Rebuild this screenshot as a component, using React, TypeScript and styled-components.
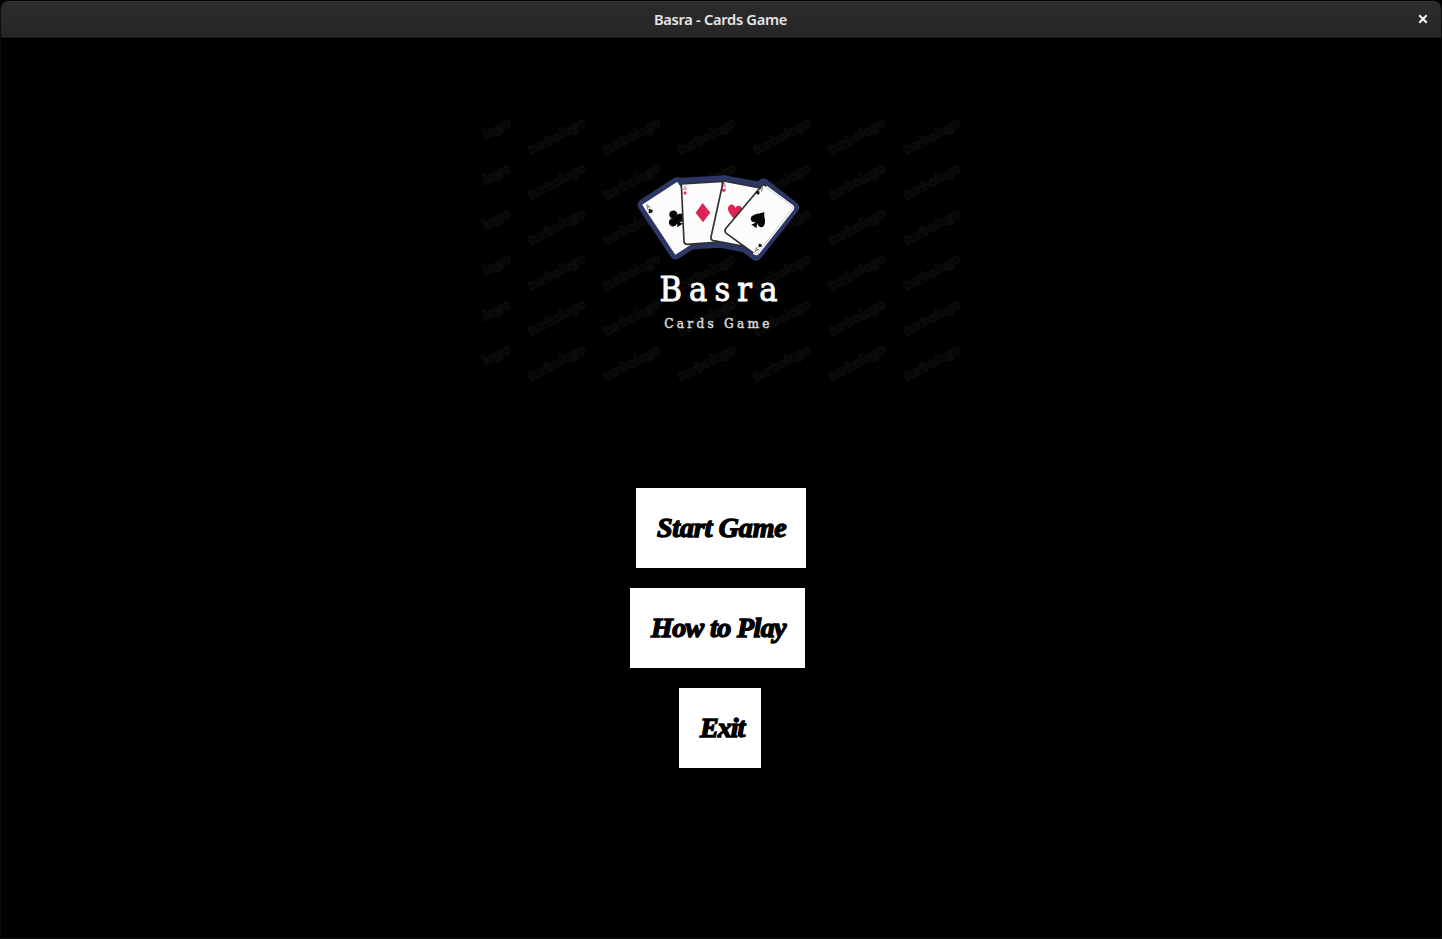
import React from 'react';
import styled, { createGlobalStyle } from 'styled-components';

const GlobalStyle = createGlobalStyle`
  * { box-sizing: border-box; }
  body { margin: 0; background: #000; overflow: hidden; }
`;

const Window = styled.div`
  width: 1442px;
  height: 939px;
  display: flex;
  flex-direction: column;
  background: #000;
  border: 1px solid #0c0c0c;
  border-top-color: #050505;
  border-radius: 8px 8px 0 0;
  overflow: hidden;
`;

const TitleBar = styled.header`
  flex: none;
  height: 37px;
  display: grid;
  grid-template-columns: 36px 1fr 36px;
  align-items: center;
  border-top: 1px solid #383838;
  border-bottom: 1px solid #151515;
  border-radius: 8px 8px 0 0;
  background: linear-gradient(#2b2b2b, #262626);
`;

const Title = styled.h1`
  grid-column: 2;
  margin: 0;
  padding: 0 1px 2px 0;
  text-align: center;
  font: 600 14.67px/20px 'Noto Sans', sans-serif;
  letter-spacing: -0.3px;
  color: #e6e6e6;
`;

const CloseButton = styled.button`
  display: flex;
  align-items: center;
  justify-content: center;
  height: 34px;
  padding: 0 0 2px;
  border: 0;
  background: none;
`;

const Screen = styled.main`
  display: flex;
  flex-direction: column;
  align-items: center;
`;

const Banner = styled.section`
  display: grid;
  width: 482px;
  height: 270px;
  margin-top: 78px;
  > * { grid-area: 1 / 1; }
`;

const Brand = styled.div`
  display: flex;
  flex-direction: column;
  align-items: center;
  padding-top: 49px;
`;

const CardsArt = styled.svg`
  display: block;
  width: 180px;
  height: 105px;
  margin-right: 2px;
`;

const Name = styled.div`
  margin-top: -2px;
  font: 34px/42px 'DejaVu Serif', serif;
  font-stretch: condensed;
  letter-spacing: 7.2px;
  margin-right: -2px;
  color: #fff;
  -webkit-text-stroke: 0.9px #fff;
  white-space: nowrap;
`;

const Tagline = styled.div`
  margin-top: 3px;
  font: 13.5px/20px 'DejaVu Serif', serif;
  font-stretch: condensed;
  letter-spacing: 3.25px;
  margin-right: 5px;
  color: #d6d6d6;
  -webkit-text-stroke: 0.5px #d6d6d6;
  white-space: nowrap;
`;

const Menu = styled.nav`
  display: flex;
  flex-direction: column;
  align-items: flex-start;
  gap: 20px;
  width: 182px;
  margin-top: 102px;
`;

const MenuButton = styled.button<{ $width: number; $indent: number; $tracking: number }>`
  width: ${(p) => p.$width}px;
  height: 80px;
  margin-left: ${(p) => p.$indent}px;
  padding: 0 0 0 21px;
  border: 0;
  background: #fff;
  color: #000;
  text-align: left;
  white-space: nowrap;
  font: italic 700 28px/36px 'Liberation Serif', serif;
  letter-spacing: ${(p) => p.$tracking}px;
  -webkit-text-stroke: 1.4px #000;
`;

const cards = [
  '40,120 141,54 239,200 137,266',
  '154,56 277,49 286,230 163,237',
  '280,48 398,70 362,248 243,225',
  '400,58 490,127 378,270 285,198',
];

const heart = 'M0 21 C-8 12 -22 3 -20 -8 C-18 -20 -5 -21 0 -10 C5 -21 18 -20 20 -8 C22 3 8 12 0 21Z';
const spade = 'M0 -28 C5 -16 23 -7 23 7 C22 20 8 20 3 11 Q4 21 10 26 H-10 Q-4 21 -3 11 C-8 20 -22 20 -23 7 C-23 -7 -5 -16 0 -28Z';

const Club = () => (
  <g fill="#050505">
    <circle cx="0" cy="-13" r="12.5" />
    <circle cx="-13" cy="6" r="12.5" />
    <circle cx="13" cy="6" r="12.5" />
    <path d="M-5 -5H5L3 10Q5 21 11 25H-11Q-5 21 -3 10Z" />
  </g>
);

const Ace = () => <path d="M-5 6L0 -7L5 6M-3 2H3" fill="none" stroke="currentColor" strokeWidth="1.5" />;

const Watermark = () => (
  <svg width="482" height="270" viewBox="0 0 482 270" aria-hidden="true">
    {Array.from({ length: 6 }, (_, row) =>
      Array.from({ length: 7 }, (_, col) => (
        <text
          key={`${row}-${col}`}
          transform={`translate(${col === 0 ? 30 : 29.5 + col * 75.1} ${6.5 + row * 45.3}) rotate(-28)`}
          textAnchor="end"
          dominantBaseline="middle"
          textLength={col === 0 ? 30 : 63}
          lengthAdjust="spacingAndGlyphs"
          fontFamily="Lato, sans-serif"
          fontWeight="900"
          fontStyle="italic"
          fontSize="14"
          fill="#020202"
          stroke="#0b0b0b"
          strokeWidth="1.4"
        >
          {col === 0 ? 'logo' : 'turbologo'}
        </text>
      )),
    )}
  </svg>
);

const FannedAces = () => (
  <CardsArt viewBox="0 0 540 315" role="img" aria-label="Four aces">
    <g fill="#2c3765" stroke="#2c3765" strokeWidth="35" strokeLinejoin="round">
      {cards.map((points) => <polygon key={points} points={points} />)}
    </g>
    <g fill="#fcfcfc" stroke="#303034" strokeWidth="5" strokeLinejoin="round">
      <polygon points={cards[0]} stroke="#fcfcfc" />
      <g transform="translate(137 160) rotate(-32)" stroke="none"><Club /></g>
      <path d="M154 57L277 49L286 230L171 238Q163 238 162 230Z" />
      <path d="M280 48L398 70L362 248L250 227Q241 225 243 216Z" />
      <path d={heart} transform="translate(314 139) rotate(10) scale(1.05)" fill="#dc2451" stroke="none" />
      <path d="M392 66Q400 54 409 64L486 121Q494 127 487 136L387 263Q379 273 370 264L290 206Q281 199 288 190Z" />
      <path d="M409 64L486 121Q494 127 487 136L387 263Q379 273 370 264" fill="none" stroke="#fcfcfc" />
    </g>
    <path d="M218 114L241 143L219 172L197 143Z" fill="#dc2451" />
    <path d={spade} transform="translate(387 163) rotate(35)" fill="#050505" />
    <g color="#dc2451" fill="#dc2451">
      <g transform="translate(165 70)"><Ace /></g>
      <path d="M165 78L170 84L165 90L160 84Z" />
      <g transform="translate(283 61) rotate(10)"><Ace /></g>
      <path d={heart} transform="translate(281 76) rotate(10) scale(.28)" />
    </g>
    <g color="#222">
      <g transform="translate(54 125) rotate(-32)"><Ace /></g>
      <g transform="translate(61 138) rotate(-32) scale(.28)"><Club /></g>
      <g transform="translate(394 72) rotate(38)"><Ace /></g>
      <path d={spade} transform="translate(384 83) rotate(38) scale(.24)" />
      <g transform="translate(380 254) rotate(218)"><Ace /></g>
      <path d={spade} transform="translate(390 242) rotate(218) scale(.24)" />
    </g>
  </CardsArt>
);

export default function App() {
  return (
    <>
      <GlobalStyle />
      <Window>
        <TitleBar>
          <Title>Basra - Cards Game</Title>
          <CloseButton aria-label="Close">
            <svg width="10" height="10" viewBox="0 0 10 10">
              <path d="M1.3 1.3L8.7 8.7M8.7 1.3L1.3 8.7" stroke="#f2f2f2" strokeWidth="2.2" />
            </svg>
          </CloseButton>
        </TitleBar>
        <Screen>
          <Banner>
            <Watermark />
            <Brand>
              <FannedAces />
              <Name>Basra</Name>
              <Tagline>Cards Game</Tagline>
            </Brand>
          </Banner>
          <Menu>
            <MenuButton $width={170} $indent={6} $tracking={-0.2}>Start Game</MenuButton>
            <MenuButton $width={175} $indent={0} $tracking={-0.6}>How to Play</MenuButton>
            <MenuButton $width={82} $indent={49} $tracking={-1}>Exit</MenuButton>
          </Menu>
        </Screen>
      </Window>
    </>
  );
}
